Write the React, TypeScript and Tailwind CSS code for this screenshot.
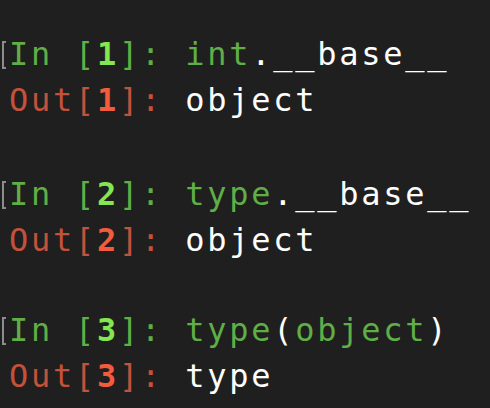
import React from "react";

const font = {
  fontFamily: '"DejaVu Sans Mono", monospace',
};

function InLine({ n, children }: { n: number; children: React.ReactNode }) {
  return (
    <div className="relative whitespace-pre">
      <div className="absolute left-[-7px] top-[10px] h-[28px] w-[4px] border-y-2 border-l-2 border-[#8c8c8c]" />
      <span className="text-[#5fae46]">In [</span>
      <span className="font-bold text-[#84e650]">{n}</span>
      <span className="text-[#5fae46]">]: </span>
      {children}
    </div>
  );
}

function OutLine({ n, children }: { n: number; children: React.ReactNode }) {
  return (
    <div className="whitespace-pre">
      <span className="text-[#c2523b]">Out[</span>
      <span className="font-bold text-[#f35b3c]">{n}</span>
      <span className="text-[#c2523b]">]: </span>
      <span className="text-white">{children}</span>
    </div>
  );
}

export default function App() {
  return (
    <div
      className="h-[408px] w-[490px] overflow-hidden bg-[#1f1f1f] pl-[9px] pt-[31px] text-[32px] leading-[46px] tracking-[2.75px] antialiased"
      style={font}
    >
      <InLine n={1}>
        <span className="text-[#5fae46]">int</span>
        <span className="text-white">.__base__</span>
      </InLine>
      <OutLine n={1}>object</OutLine>
      <div className="h-[48px]" />
      <InLine n={2}>
        <span className="text-[#5fae46]">type</span>
        <span className="text-white">.__base__</span>
      </InLine>
      <OutLine n={2}>object</OutLine>
      <div className="h-[44px]" />
      <InLine n={3}>
        <span className="text-[#5fae46]">type</span>
        <span className="text-white">(</span>
        <span className="text-[#5fae46]">object</span>
        <span className="text-white">)</span>
      </InLine>
      <OutLine n={3}>type</OutLine>
    </div>
  );
}
